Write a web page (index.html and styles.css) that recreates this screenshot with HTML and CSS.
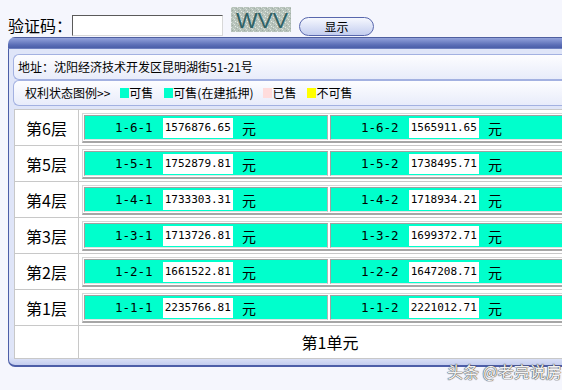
FILE: index.html
```html
<!DOCTYPE html>
<html lang="zh">
<head>
<meta charset="utf-8">
<title>楼盘表</title>
<link rel="stylesheet" href="styles.css">
</head>
<body>
<div class="top">
  <span class="lbl">验证码：</span>
  <input class="code-input" type="text">
  <svg class="captcha" width="60" height="25" viewBox="0 0 60 25">
    <defs>
      <pattern id="noise" width="6" height="5" patternUnits="userSpaceOnUse">
        <rect width="6" height="5" fill="#b7c3bb"/>
        <rect x="0" y="0" width="1" height="1" fill="#e2e8e3"/>
        <rect x="3" y="2" width="1" height="1" fill="#dce3de"/>
        <rect x="1" y="3" width="1" height="1" fill="#9eaaa3"/>
        <rect x="4" y="4" width="1" height="1" fill="#e6ebe7"/>
        <rect x="5" y="1" width="1" height="1" fill="#a3afa8"/>
        <rect x="2" y="1" width="1" height="1" fill="#cfd8d2"/>
      </pattern>
    </defs>
    <rect width="60" height="25" fill="url(#noise)"/>
    <text x="5" y="21" font-family="Liberation Sans" font-size="22" fill="#2f6266" textLength="52" lengthAdjust="spacingAndGlyphs">WVV</text>
  </svg>
  <button class="btn" type="button">显示</button>
</div>

<div class="panel">
  <div class="panel-head"></div>
  <div class="panel-body">
    <div class="addr">地址：沈阳经济技术开发区昆明湖街51-21号</div>
    <div class="legend">
      <span>权利状态图例&gt;&gt;</span>
      <i class="sw sw-sale m1"></i><span>可售</span>
      <i class="sw sw-sale m2"></i><span>可售(在建抵押)</span>
      <i class="sw sw-sold m3"></i><span>已售</span>
      <i class="sw sw-no m2"></i><span>不可售</span>
    </div>
    <div class="grid">
      <div class="row">
        <div class="floor">第6层</div>
        <div class="units"><div class="unit-box">
          <div class="unit"><span class="no">1-6-1</span><span class="price">1576876.65</span><span class="yuan">元</span></div>
          <div class="unit"><span class="no">1-6-2</span><span class="price">1565911.65</span><span class="yuan">元</span></div>
        </div></div>
      </div>
      <div class="row">
        <div class="floor">第5层</div>
        <div class="units"><div class="unit-box">
          <div class="unit"><span class="no">1-5-1</span><span class="price">1752879.81</span><span class="yuan">元</span></div>
          <div class="unit"><span class="no">1-5-2</span><span class="price">1738495.71</span><span class="yuan">元</span></div>
        </div></div>
      </div>
      <div class="row">
        <div class="floor">第4层</div>
        <div class="units"><div class="unit-box">
          <div class="unit"><span class="no">1-4-1</span><span class="price">1733303.31</span><span class="yuan">元</span></div>
          <div class="unit"><span class="no">1-4-2</span><span class="price">1718934.21</span><span class="yuan">元</span></div>
        </div></div>
      </div>
      <div class="row">
        <div class="floor">第3层</div>
        <div class="units"><div class="unit-box">
          <div class="unit"><span class="no">1-3-1</span><span class="price">1713726.81</span><span class="yuan">元</span></div>
          <div class="unit"><span class="no">1-3-2</span><span class="price">1699372.71</span><span class="yuan">元</span></div>
        </div></div>
      </div>
      <div class="row">
        <div class="floor">第2层</div>
        <div class="units"><div class="unit-box">
          <div class="unit"><span class="no">1-2-1</span><span class="price">1661522.81</span><span class="yuan">元</span></div>
          <div class="unit"><span class="no">1-2-2</span><span class="price">1647208.71</span><span class="yuan">元</span></div>
        </div></div>
      </div>
      <div class="row">
        <div class="floor">第1层</div>
        <div class="units"><div class="unit-box">
          <div class="unit"><span class="no">1-1-1</span><span class="price">2235766.81</span><span class="yuan">元</span></div>
          <div class="unit"><span class="no">1-1-2</span><span class="price">2221012.71</span><span class="yuan">元</span></div>
        </div></div>
      </div>
      <div class="row last">
        <div class="floor"></div>
        <div class="uname">第1单元</div>
      </div>
    </div>
  </div>
</div>

<div class="wm">头条 @老亮说房</div>
</body>
</html>
```

FILE: styles.css
```css
html, body {
  margin: 0;
  padding: 0;
  overflow: hidden;
}

body {
  position: relative;
  width: 562px;
  height: 390px;
  background: #f5f6fd;
  font-family: "Noto Sans CJK SC", sans-serif;
  color: #000;
}

/* top line: captcha */
.top {
  display: flex;
  align-items: flex-start;
  height: 30px;
  padding: 7px 0 0 8px;
}

.lbl {
  font-size: 16px;
  line-height: 20px;
  margin-top: 8px;
  width: 64px;
  white-space: nowrap;
}

.code-input {
  box-sizing: border-box;
  width: 151px;
  height: 21px;
  margin: 8px 0 0 0;
  padding: 0;
  border: 1px solid;
  border-color: #5a5a5a #d8d8d8 #d8d8d8 #5a5a5a;
  background: #fff;
}

.captcha {
  display: block;
  margin-left: 8px;
}

.btn {
  box-sizing: border-box;
  width: 75px;
  height: 19px;
  margin: 10px 0 0 8px;
  padding: 0;
  border: 1px solid #5867ad;
  border-radius: 10px;
  background: linear-gradient(#f6f8fe, #c3cdef);
  font-family: "Noto Sans CJK SC", sans-serif;
  font-size: 12px;
  line-height: 16px;
  color: #000;
}

/* panel */
.panel {
  margin-left: 8px;
  width: 574px;
}

.panel-head {
  height: 12px;
  border-radius: 7px 0 0 0;
  background: linear-gradient(#4f5f9f 0px, #4f5f9f 1px, #93a2da 1px, #7b8ccc 4px, #5a6db6 8px, #4a5ea8 11px, #8f9fd6 12px);
}

.panel-body {
  padding: 5px 0 6px 4px;
  border-left: 1px solid #4d5ea8;
  border-bottom: 2px solid #4d5ea8;
  border-radius: 0 0 0 7px;
  background: linear-gradient(#dfe5f8 0, #dfe5f8 calc(100% - 8px), #c4cdef 100%);
}

.addr,
.legend {
  box-sizing: border-box;
  height: 26px;
  border: 1px solid #a3b1e1;
  border-right: 0;
  border-radius: 6px 0 0 6px;
  background: linear-gradient(#fdfdff, #e8ecfa);
  font-size: 12px;
  line-height: 24px;
  white-space: nowrap;
}

.addr {
  padding-left: 4px;
}

.legend {
  display: flex;
  align-items: center;
  padding-left: 11px;
}

.sw {
  display: inline-block;
  width: 9px;
  height: 10px;
}

.sw-sale { background: #00ffcc; }
.sw-sold { background: #ffdcdc; }
.sw-no { background: #ffff00; }

.m1 { margin-left: 10px; }
.m2 { margin-left: 11px; }
.m3 { margin-left: 10px; }

/* floor grid */
.grid {
  margin: 3px 0 0 1px;
  border: 1px solid #c8c8c8;
  background: #fff;
}

.row {
  display: flex;
  height: 35px;
  border-bottom: 1px solid #c8c8c8;
}

.row.last {
  height: 32px;
  border-bottom: 0;
}

.floor {
  width: 63px;
  flex: none;
  border-right: 1px solid #c8c8c8;
  display: flex;
  align-items: center;
  justify-content: center;
  font-size: 16px;
}

.units {
  flex: 1;
  padding: 3px 0 0 3px;
}

.unit-box {
  display: flex;
  gap: 2px;
  width: max-content;
  padding: 1px;
  border: 1px solid;
  border-bottom-width: 2px;
  border-color: #d6d6d6 #a6a6a6 #a6a6a6 #d6d6d6;
}

.unit {
  box-sizing: border-box;
  width: 244px;
  height: 25px;
  display: flex;
  align-items: center;
  padding-left: 30px;
  background: #00ffcc;
  border: 1px solid;
  border-color: #a0a0a0 #b4b4b4 #e2e2e2 #a0a0a0;
  white-space: nowrap;
}

.no {
  font-family: "DejaVu Sans Mono", monospace;
  font-size: 12.5px;
}

.price {
  margin-left: 10px;
  height: 20px;
  padding: 0 2px;
  background: #fff;
  font-family: "DejaVu Sans Mono", monospace;
  font-size: 11px;
  line-height: 20px;
}

.yuan {
  margin-left: 9px;
  font-size: 14px;
}

.uname {
  flex: 1;
  display: flex;
  align-items: center;
  justify-content: center;
  font-size: 16px;
}

/* watermark overlay */
.wm {
  position: absolute;
  left: 447px;
  top: 361px;
  font-size: 16px;
  line-height: 20px;
  color: #f2f2f2;
  text-shadow: 0 0 1px #505050, 0 0 1px #505050, 0 0 1px #505050;
  white-space: nowrap;
}
```
